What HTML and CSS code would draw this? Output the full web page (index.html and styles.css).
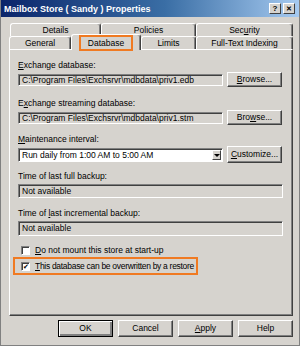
FILE: index.html
```html
<!DOCTYPE html>
<html lang="en">
<head>
  <meta charset="UTF-8">
  <title>Mailbox Store ( Sandy ) Properties</title>
  <link rel="stylesheet" href="styles.css">
</head>
<body>
  <div class="window">
    <div class="titlebar">
      <span class="title">Mailbox Store ( Sandy ) Properties</span>
      <span class="caption-btn">?</span>
      <span class="caption-btn close">&#10005;</span>
    </div>

    <div class="tabs">
      <div class="tab-row back">
        <div class="tab t-details">Details</div>
        <div class="tab t-policies">Policies</div>
        <div class="tab t-security">Sec<u>u</u>rity</div>
      </div>
      <div class="tab-row front">
        <div class="tab t-general">General</div>
        <div class="tab t-database selected"><span class="mark">Database</span></div>
        <div class="tab t-limits">Limits</div>
        <div class="tab t-fti">Full-Text Indexing</div>
      </div>
    </div>

    <div class="panel">
      <div class="label l1"><u>E</u>xchange database:</div>
      <div class="row">
        <div class="textbox narrow">C:\Program Files\Exchsrvr\mdbdata\priv1.edb</div>
        <div class="button"><u>B</u>rowse...</div>
      </div>

      <div class="label l2">E<u>x</u>change streaming database:</div>
      <div class="row">
        <div class="textbox narrow">C:\Program Files\Exchsrvr\mdbdata\priv1.stm</div>
        <div class="button">Bro<u>w</u>se...</div>
      </div>

      <div class="label l3"><u>M</u>aintenance interval:</div>
      <div class="row tall">
        <div class="combo">
          <span class="combo-text">Run daily from 1:00 AM to 5:00 AM</span>
          <span class="combo-arrow"></span>
        </div>
        <div class="button"><u>C</u>ustomize...</div>
      </div>

      <div class="label l4">Time of last full backup:</div>
      <div class="textbox wide">Not available</div>

      <div class="label l5">Time of <u>l</u>ast incremental backup:</div>
      <div class="textbox wide w2">Not available</div>

      <div class="check c1">
        <span class="box"></span>
        <span><u>D</u>o not mount this store at start-up</span>
      </div>
      <div class="check c2">
        <span class="box checked">&#10004;</span>
        <span><u>T</u>his database can be overwritten by a restore</span>
      </div>
    </div>

    <div class="actions">
      <div class="button default">OK</div>
      <div class="button">Cancel</div>
      <div class="button"><u>A</u>pply</div>
      <div class="button">Help</div>
    </div>
  </div>
</body>
</html>
```

FILE: styles.css
```css
body {
  margin: 0;
  font-family: "Liberation Sans", Arial, sans-serif;
  font-size: 8.5px;
  color: #000;
}
.window {
  width: 300px;
  height: 346px;
  box-sizing: border-box;
  background: #d6d3ce;
  border: 1px solid #808080;
  border-top: none;
}
.titlebar {
  height: 17px;
  display: flex;
  align-items: center;
  padding: 0 4px 0 3px;
  background: linear-gradient(to right, #0a246a, #3a6ea5 55%, #a6caf0);
}
.title {
  flex: 1;
  color: #fff;
  font-weight: bold;
  font-size: 9px;
}
.caption-btn {
  width: 10px;
  height: 9px;
  margin-left: 1px;
  background: #d6d3ce;
  border: 1px solid;
  border-color: #fff #404040 #404040 #fff;
  font-size: 8px;
  font-weight: bold;
  line-height: 9px;
  text-align: center;
}
.caption-btn.close {
  margin-left: 2px;
  font-size: 7px;
}

.tabs {
  margin: 6px 0 0 8px;
  width: 285px;
}
.tab-row {
  display: flex;
  height: 13px;
}
.tab {
  box-sizing: border-box;
  height: 13px;
  border: 1px solid;
  border-color: #fff #404040 transparent #fff;
  border-bottom: none;
  box-shadow: inset -1px 0 #808080;
  border-radius: 3px 3px 0 0;
  text-align: center;
  line-height: 12px;
}
.back {
  padding-left: 1px;
}
.t-details { width: 91px; }
.t-policies { width: 95px; }
.t-security { width: 97px; }
.t-general { width: 62px; }
.t-database { width: 70px; }
.t-limits { width: 55px; }
.t-fti { width: 97px; }
.tab.selected {
  position: relative;
  z-index: 1;
  height: 16px;
  margin-top: -2px;
  margin-bottom: -1px;
  background: #d6d3ce;
  line-height: 17px;
}
.tab .mark {
  display: inline-block;
  padding: 0 7px;
  line-height: 12px;
  outline: 2px solid #f07a22;
}

.panel {
  height: 267px;
  box-sizing: border-box;
  margin: 0 6px 0 8px;
  padding: 9px 10px 0 8px;
  border: 1px solid;
  border-color: #fff #404040 #404040 #fff;
  box-shadow: inset -1px -1px #808080;
}
.label {
  line-height: 12px;
}
.l2 { margin-top: 10px; }
.l3 { margin-top: 8px; }
.l4 { margin-top: 7px; }
.l5 { margin-top: 9px; }
.row {
  display: flex;
  align-items: center;
  justify-content: space-between;
  height: 15px;
  margin-top: 1px;
}
.row.tall {
  height: 17px;
}
.textbox {
  box-sizing: border-box;
  height: 12px;
  padding: 0 3px;
  line-height: 10px;
  border: 1px solid;
  border-color: #808080 #fff #fff #808080;
  box-shadow: inset 1px 1px #404040;
  white-space: nowrap;
  overflow: hidden;
}
.textbox.narrow {
  width: 205px;
}
.textbox.wide {
  width: 265px;
  height: 14px;
  line-height: 12px;
  margin-top: 2px;
}
.textbox.w2 {
  height: 15px;
}
.combo {
  box-sizing: border-box;
  width: 205px;
  height: 14px;
  display: flex;
  align-items: center;
  background: #fff;
  border: 1px solid;
  border-color: #808080 #fff #fff #808080;
  box-shadow: inset 1px 1px #404040;
  padding: 1px 1px 1px 3px;
}
.combo-text {
  flex: 1;
  line-height: 10px;
}
.combo-arrow {
  position: relative;
  width: 9px;
  height: 10px;
  box-sizing: border-box;
  background: #d6d3ce;
  border: 1px solid;
  border-color: #fff #404040 #404040 #fff;
}
.combo-arrow::after {
  content: "";
  position: absolute;
  left: 1px;
  top: 3px;
  border: 3px solid transparent;
  border-top: 3px solid #000;
  border-bottom: none;
}
.button {
  box-sizing: border-box;
  width: 55px;
  height: 15px;
  line-height: 12px;
  text-align: center;
  border: 1px solid;
  border-color: #fff #404040 #404040 #fff;
  box-shadow: inset -1px -1px #808080;
}
.row.tall .button {
  height: 17px;
  line-height: 14px;
}

.check {
  display: flex;
  align-items: center;
  gap: 5px;
  height: 12px;
  padding-left: 3px;
  white-space: nowrap;
}
.c1 {
  margin-top: 8px;
}
.c2 {
  margin-top: 4px;
  width: fit-content;
  margin-left: -2px;
  padding: 0 1px 0 5px;
  letter-spacing: -0.3px;
  outline: 2px solid #f07a22;
  outline-offset: 1px;
}
.box {
  box-sizing: border-box;
  width: 9px;
  height: 9px;
  background: #fff;
  border: 1px solid;
  border-color: #808080 #fff #fff #808080;
  box-shadow: inset 1px 1px #404040;
  font-size: 7px;
  line-height: 8px;
  text-align: center;
  letter-spacing: 0;
}

.actions {
  display: flex;
  justify-content: flex-end;
  gap: 5px;
  margin: 4px 6px 0 0;
}
.actions .button {
  height: 17px;
  line-height: 15px;
}
.button.default {
  border: 1px solid #000;
  box-shadow: inset 1px 1px #fff, inset -2px -2px #808080;
}
```
